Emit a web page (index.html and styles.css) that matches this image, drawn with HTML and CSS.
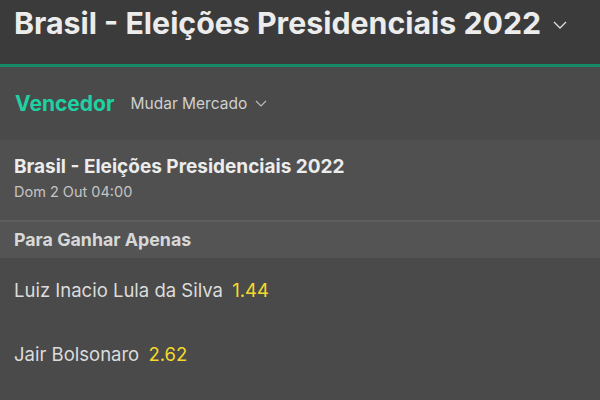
FILE: index.html
```html
<!DOCTYPE html>
<html lang="pt">
<head>
    <meta charset="UTF-8">
    <meta name="viewport" content="width=device-width, initial-scale=1.0">
    <title>Brasil - Eleições Presidenciais 2022</title>
    <link rel="stylesheet" href="styles.css">
</head>
<body>
    <header class="top">
        <h1>Brasil - Eleições Presidenciais 2022</h1>
        <svg class="chev" viewBox="0 0 14 8" width="14" height="8"><path d="M1 1l6 6 6-6" fill="none" stroke="#ddd" stroke-width="1.3"/></svg>
    </header>

    <div class="market">
        <span class="winner">Vencedor</span>
        <span class="change">Mudar Mercado</span>
        <svg viewBox="0 0 12 7" width="12" height="7"><path d="M1 1l5 5 5-5" fill="none" stroke="#bbb" stroke-width="1.2"/></svg>
    </div>

    <div class="event">
        <div class="event-title">Brasil - Eleições Presidenciais 2022</div>
        <div class="event-date">Dom 2 Out 04:00</div>
    </div>

    <div class="group">Para Ganhar Apenas</div>

    <div class="row">Luiz Inacio Lula da Silva <span class="odds">1.44</span></div>
    <div class="row">Jair Bolsonaro <span class="odds">2.62</span></div>
</body>
</html>
```

FILE: styles.css
```css
* {
    box-sizing: border-box;
}

body {
    margin: 0;
    font-family: Inter, "Noto Sans", sans-serif;
    background-color: #4a4a4a;
    color: #e6e6e6;
    height: 400px;
    overflow: hidden;
}

.top {
    display: flex;
    align-items: center;
    gap: 12px;
    height: 67px;
    padding: 0 14px 19px;
    background-color: #3b3b3b;
    border-bottom: 3px solid #148a68;
}

.top h1 {
    margin: 0;
    font-size: 30.3px;
    line-height: 38px;
    font-weight: 700;
    color: #ececec;
}

.chev {
    margin-top: 4px;
}

.market {
    display: flex;
    align-items: center;
    height: 73px;
    padding: 0 14px 0 15px;
}

.winner {
    color: #1fd1a2;
    font-size: 21px;
    font-weight: 700;
    margin-right: 16px;
}

.change {
    color: #d0d0d0;
    font-size: 15.5px;
    margin-right: 8px;
}

.event {
    background-color: #505050;
    padding: 15px 14px 0;
    height: 82px;
    border-bottom: 2px solid #5e5e5e;
}

.event-title {
    font-size: 19px;
    line-height: 23px;
    font-weight: 700;
    color: #ececec;
}

.event-date {
    margin-top: 5px;
    font-size: 14.5px;
    line-height: 18px;
    color: #c4c4c4;
}

.group {
    background-color: #545454;
    height: 36px;
    line-height: 36px;
    padding: 0 14px;
    font-size: 17.8px;
    font-weight: 700;
    color: #d8d8d8;
}

.row {
    height: 64px;
    line-height: 64px;
    padding: 0 14px;
    font-size: 18.5px;
    color: #dcdcdc;
}

.odds {
    color: #f4d92c;
    margin-left: 4px;
}
```
